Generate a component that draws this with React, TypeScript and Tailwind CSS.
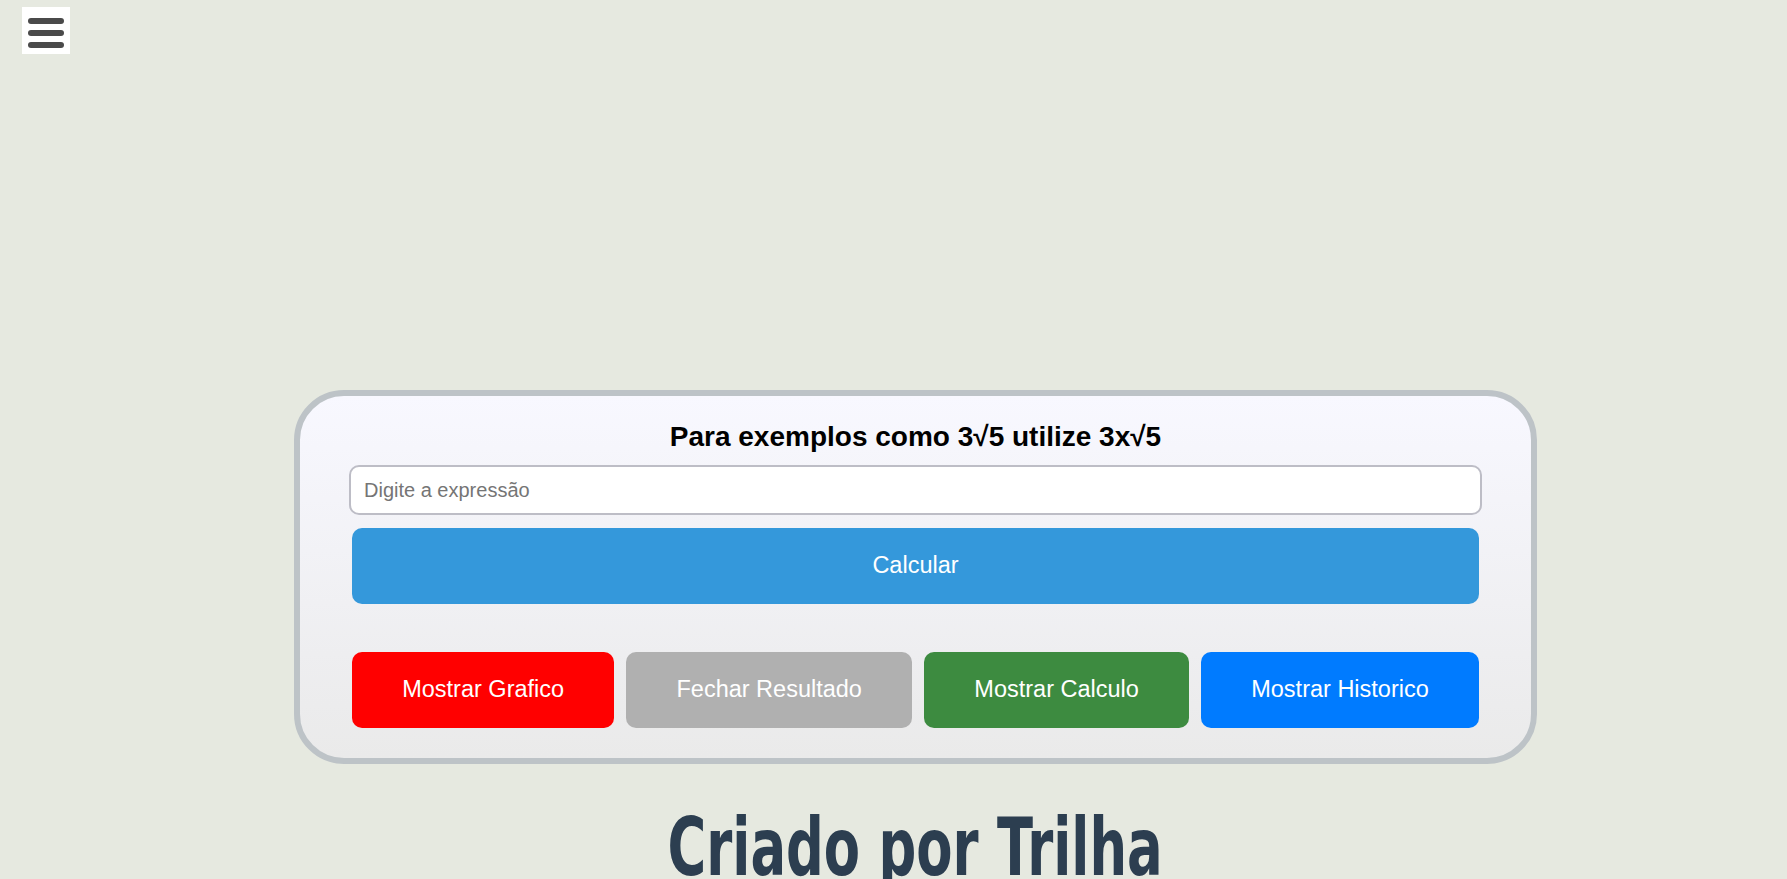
const actions = [
  { label: 'Mostrar Grafico', color: 'bg-[#ff0000]' },
  { label: 'Fechar Resultado', color: 'bg-[#b0b0b0]' },
  { label: 'Mostrar Calculo', color: 'bg-[#3d8b40]' },
  { label: 'Mostrar Historico', color: 'bg-[#007bff]' },
];

export default function App() {
  return (
    <div
      className="min-h-screen overflow-hidden bg-[#e6e9e0]"
      style={{ fontFamily: '"Liberation Sans", Arial, sans-serif' }}
    >
      {/* Menu toggle */}
      <button className="fixed left-[22px] top-[7px] flex h-[47px] w-[48px] flex-col items-center gap-[6px] bg-white pt-[11px]">
        <span className="h-[6px] w-[36px] rounded-full bg-[#4a4a4a]" />
        <span className="h-[6px] w-[36px] rounded-full bg-[#4a4a4a]" />
        <span className="h-[6px] w-[36px] rounded-full bg-[#4a4a4a]" />
      </button>

      <div className="flex flex-col items-center pl-[44px] pt-[390px]">
        {/* Calculator card */}
        <div className="w-[1243px] rounded-[50px] border-[6px] border-[#bdc3c7] bg-gradient-to-b from-[#f8f8ff] to-[#eaeaea] px-[49px] pb-[30px] pt-[25px]">
          <h2 className="text-center text-[28px] font-bold leading-[31px] text-black">
            Para exemplos como 3√5 utilize 3x√5
          </h2>

          <input
            type="text"
            placeholder="Digite a expressão"
            className="mt-[13px] block h-[50px] w-full rounded-[10px] border-2 border-[#bdbdc6] bg-white px-[13px] text-[20px] text-black outline-none placeholder:text-[#757575]"
          />

          <div className="px-[3px]">
            <button className="mt-[13px] flex h-[76px] w-full items-center justify-center rounded-[10px] bg-[#3498db] text-[23.5px] text-white">
              Calcular
            </button>

            <div className="mt-[48px] flex gap-3">
              {actions.map((a) => (
                <button
                  key={a.label}
                  className={`flex h-[76px] flex-auto items-center justify-center rounded-[10px] px-5 text-[23.5px] text-white ${a.color}`}
                >
                  {a.label}
                </button>
              ))}
            </div>
          </div>
        </div>

        {/* Footer credit */}
        <h1
          className="mt-[38px] inline-block scale-x-[0.66] whitespace-nowrap text-[80px] font-bold leading-[92px] text-[#2c3e50]"
          style={{ fontFamily: '"DejaVu Sans", sans-serif' }}
        >
          Criado por Trilha
        </h1>
      </div>
    </div>
  );
}
